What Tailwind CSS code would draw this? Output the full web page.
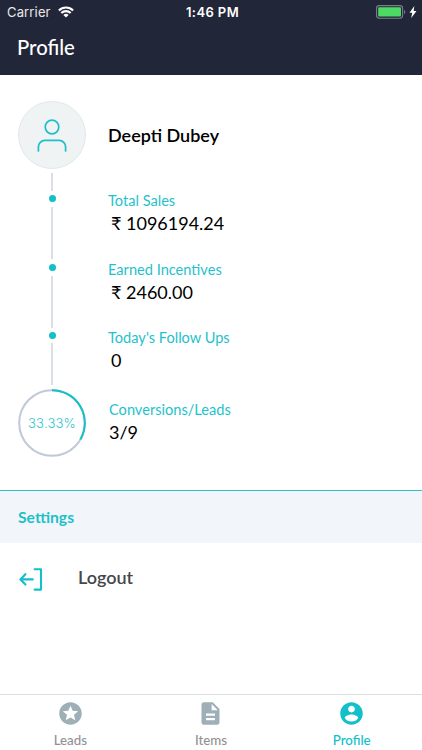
<!DOCTYPE html>
<html lang="en">
<head>
<meta charset="utf-8">
<meta name="viewport" content="width=device-width, initial-scale=1">
<title>Profile</title>
<script src="https://cdn.jsdelivr.net/npm/@tailwindcss/browser@4"></script>
</head>
<body class="bg-white">
<div class="flex h-[750px] w-[422px] flex-col overflow-hidden bg-white font-['Lato',sans-serif] text-black">
  <header class="h-[75px] shrink-0 bg-[#222639] text-white">
    <div class="grid h-6 grid-cols-3 items-center pl-[7px] pr-[5px] font-['Inter',sans-serif]">
      <div class="flex items-center gap-[7px]">
        <span class="text-[13px] leading-6 tracking-[0.15px] text-white/90">Carrier</span>
        <svg class="h-3 w-4" viewBox="0 0 16 12" fill="none" stroke="#fff" stroke-width="2.1"><path d="M.9 4.4a10.2 10.2 0 0 1 14.2 0M3.3 7.1a6.7 6.7 0 0 1 9.4 0"/><path d="M8 11.6 5.4 9a3.7 3.7 0 0 1 5.2 0Z" fill="#fff" stroke="none"/></svg>
      </div>
      <div class="pl-px text-center text-[13px] font-semibold leading-6 tracking-[0.4px]">1:46 PM</div>
      <div class="flex items-center justify-end gap-[3px]">
        <svg class="h-[14px] w-[30px]" viewBox="0 0 30 14"><rect x=".6" y=".6" width="26" height="12.6" rx="2.6" fill="none" stroke="#7c7f8b" stroke-width="1.1"/><rect x="2.2" y="2.3" width="22.8" height="9.2" rx="1" fill="#4cd964"/><path d="M28.1 4.8c1.7.8 1.7 3.6 0 4.4Z" fill="#7c7f8b"/></svg>
        <svg class="h-[12px] w-[8px]" viewBox="0 0 7 11" fill="#fff"><path d="M4.7 0 .3 6.1h2.5L1.9 11l4.8-6.5H4.1Z"/></svg>
      </div>
    </div>
    <h1 class="pl-[17px] pt-[9px] text-[20.3px] font-medium leading-7">Profile</h1>
  </header>

  <main class="grow">
    <section class="flex h-[415px] gap-[22px] pl-[18px] pt-[25.5px]">
      <div class="flex w-[68px] flex-col items-center">
        <div class="flex size-[68px] shrink-0 justify-center rounded-full border border-[#e1e8ec] bg-[#eff3f4] pt-[17px]">
          <svg class="h-[34px] w-[30px]" viewBox="0 0 30 34" fill="none" stroke="#1fbfc8" stroke-width="1.7" stroke-linecap="round"><circle cx="15" cy="8" r="6.8"/><path d="M1.4 32v-4.2a6.400 6.400 0 0 1 6.400-6.400h14.400a6.400 6.400 0 0 1 6.400 6.400V32"/></svg>
        </div>
        <div class="mt-1 h-[18px] w-[2px] bg-[#d9dfe4]"></div>
        <div class="mt-[4.5px] size-[7px] rounded-full bg-[#12bfca]"></div>
        <div class="mt-[5px] h-[52px] w-[2px] bg-[#d9dfe4]"></div>
        <div class="mt-[4.5px] size-[7px] rounded-full bg-[#12bfca]"></div>
        <div class="mt-[5px] h-[52px] w-[2px] bg-[#d9dfe4]"></div>
        <div class="mt-[4.5px] size-[7px] rounded-full bg-[#12bfca]"></div>
        <div class="mt-1 h-[42px] w-[2px] bg-[#d9dfe4]"></div>
        <div class="mt-1 grid size-[68px] shrink-0 place-items-center">
          <svg class="col-start-1 row-start-1 size-[68px]" viewBox="0 0 68 68" fill="none" stroke-width="2"><circle cx="34" cy="34" r="32.8" stroke="#bfc9da"/><path d="M34 1.2A32.8 32.8 0 0 1 62.4 50.4" stroke="#12bfca"/></svg>
          <span class="col-start-1 row-start-1 pt-[2px] font-['Inter',sans-serif] text-[13px] font-light tracking-[0.2px] text-[#35c4cd]">33.33%</span>
        </div>
      </div>
      <div class="flex flex-col">
        <h2 class="mt-[22.5px] text-[18px] font-semibold leading-6">Deepti Dubey</h2>
        <div class="mt-[43.5px] h-[69px]">
          <div class="text-[14.6px] leading-5 text-[#1fc2cb]">Total Sales</div>
          <div class="pl-[3px] text-[18px] leading-6">₹ 1096194.24</div>
        </div>
        <div class="h-[68px]">
          <div class="text-[14.6px] leading-5 text-[#1fc2cb]">Earned Incentives</div>
          <div class="pl-[3px] text-[18px] leading-6">₹ 2460.00</div>
        </div>
        <div class="h-[72px]">
          <div class="text-[14.6px] leading-5 text-[#1fc2cb]">Today's Follow Ups</div>
          <div class="pl-[3px] text-[18px] leading-6">0</div>
        </div>
        <div class="pl-px">
          <div class="text-[14.6px] leading-5 text-[#1fc2cb]">Conversions/Leads</div>
          <div class="text-[18px] leading-6">3/9</div>
        </div>
      </div>
    </section>
    <h3 class="h-[53px] border-t border-[#35bdc5] bg-[#f2f6fa] pl-[18px] pt-[14px] text-[15.7px] font-bold leading-6 text-[#1fc0c9]">Settings</h3>
    <div class="flex h-[72px] items-center gap-[35px] pl-[19px]">
      <svg class="h-6 w-6" viewBox="0 0 24 24" fill="none" stroke="#12bfca" stroke-width="2.1" stroke-linecap="round" stroke-linejoin="round"><path d="M15.600 2.200H22v20.400h-6.400M13.800 12.400H1.400M6.400 7.200 1.400 12.400l5 5.200"/></svg>
      <span class="pb-[4px] text-[18px] font-semibold leading-6 text-[#45474b]">Logout</span>
    </div>
  </main>

  <nav class="grid h-14 shrink-0 grid-cols-3 border-t border-[#dddfe0] text-[13.3px] font-medium leading-4 text-[#929292]">
    <div class="flex flex-col items-center gap-[5px] pt-[5px]">
      <svg class="size-[27px]" viewBox="0 0 24 24" fill="#9eafb8"><path d="M11.99 2C6.47 2 2 6.48 2 12s4.47 10 9.99 10C17.52 22 22 17.52 22 12S17.52 2 11.99 2zm4.24 16L12 15.45 7.77 18l1.12-4.81-3.73-3.23 4.92-.42L12 5l1.92 4.53 4.92.42-3.73 3.23L16.23 18z"/></svg>
      <span>Leads</span>
    </div>
    <div class="flex flex-col items-center gap-[5px] pt-[5px]">
      <svg class="size-[27px]" viewBox="0 0 24 24" fill="#9eafb8"><path d="M14 2H6c-1.1 0-1.99.9-1.99 2L4 20c0 1.1.89 2 1.99 2H18c1.1 0 2-.9 2-2V8l-6-6zm2 16H8v-2h8v2zm0-4H8v-2h8v2zm-3-5V3.5L18.5 9H13z"/></svg>
      <span>Items</span>
    </div>
    <div class="flex flex-col items-center gap-[5px] pt-[5px] text-[#12bfca]">
      <svg class="size-[27px]" viewBox="0 0 24 24" fill="currentColor"><path d="M12 2C6.48 2 2 6.48 2 12s4.48 10 10 10 10-4.48 10-10S17.52 2 12 2zm0 3c1.66 0 3 1.34 3 3s-1.34 3-3 3-3-1.34-3-3 1.34-3 3-3zm0 14.2c-2.5 0-4.71-1.28-6-3.22.03-1.99 4-3.08 6-3.08 1.99 0 5.97 1.09 6 3.08-1.29 1.94-3.5 3.22-6 3.22z"/></svg>
      <span>Profile</span>
    </div>
  </nav>
</div>
</body>
</html>
